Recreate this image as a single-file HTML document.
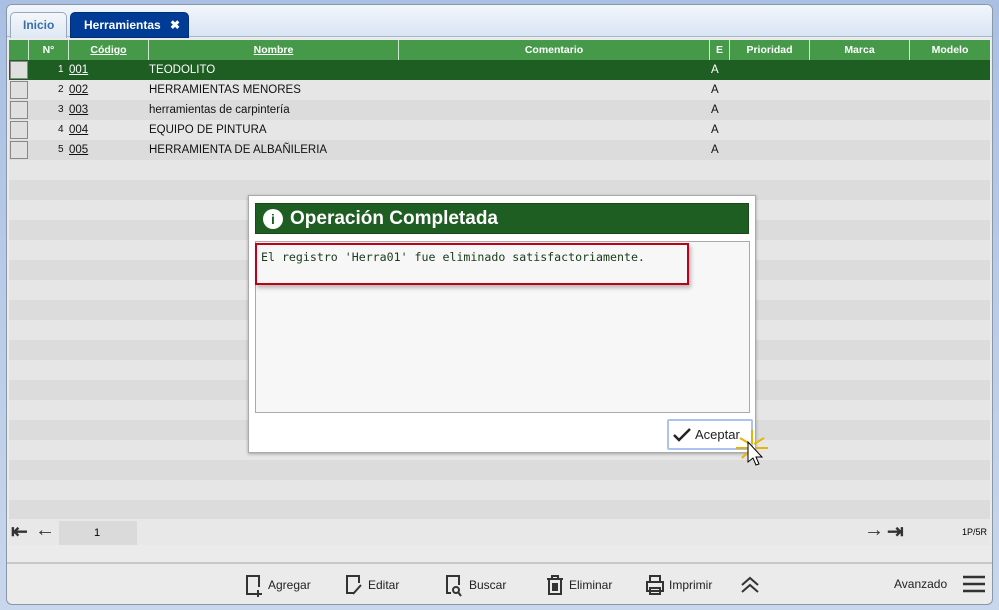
<!DOCTYPE html><html><head><meta charset="utf-8"><style>
*{box-sizing:border-box;margin:0;padding:0}
body{width:999px;height:610px;background:linear-gradient(#a9c0e3,#c9d7ec);font-family:"Liberation Sans",Verdana,sans-serif;position:relative;overflow:hidden}
.win{position:absolute;left:6px;top:4px;width:987px;height:601px;background:#ebebeb;border:1px solid #8a97a8;border-radius:6px;overflow:hidden}
.tabbar{position:absolute;left:0;top:0;width:100%;height:32px;background:linear-gradient(#f2f6fc,#d9e5f4);border-bottom:1px solid #a8b8cc}
.tab{position:absolute;top:7px;height:26px;border-radius:5px 5px 0 0;font-weight:bold;font-size:12px;line-height:24px;padding-left:13px}
.grid{position:absolute;left:2px;top:35px;width:981px}
.hdr{position:absolute;top:0;height:20px;background:#47994a;color:#fff;font-weight:bold;font-size:10.5px;line-height:20px;text-align:center;border-right:1px solid #cfe6cf}
.row{position:absolute;left:0;width:981px;height:20px;font-size:11.5px;line-height:20px;color:#111}
.row span{position:absolute}
.row span.n{font-size:10px}
.cb{position:absolute;left:1px;top:1px;width:18px;height:18px;border:1px solid #888;background:#e0e0e0}
.dlg{position:absolute;left:248px;top:195px;width:508px;height:258px;background:#fff;border:1px solid #aaa;box-shadow:0 1px 3px rgba(0,0,0,.3)}
.tb{font-size:12px;color:#222;position:absolute;top:578px}
.ar{position:absolute;top:0;font-size:20px;font-weight:bold;color:#333}
</style></head><body>
<div class="win">
<div class="tabbar">
<div class="tab" style="left:3px;width:57px;background:linear-gradient(#f4f7fb,#dfe8f3);border:1px solid #9aa8bb;border-bottom:none;color:#3a6ea8;padding-left:12px">Inicio</div>
<div class="tab" style="left:63px;width:119px;background:#003b96;color:#fff;border:1px solid #002f7a">Herramientas<span style="position:absolute;right:8px;font-size:12px">✖</span></div>
</div>
<div class="grid">
<div class="hdr" style="left:0;width:20px"></div>
<div class="hdr" style="left:20px;width:40px">N°</div>
<div class="hdr" style="left:60px;width:80px;text-decoration:underline">Código</div>
<div class="hdr" style="left:140px;width:250px;text-decoration:underline">Nombre</div>
<div class="hdr" style="left:390px;width:311px">Comentario</div>
<div class="hdr" style="left:701px;width:20px">E</div>
<div class="hdr" style="left:721px;width:80px">Prioridad</div>
<div class="hdr" style="left:801px;width:100px">Marca</div>
<div class="hdr" style="left:901px;width:80px;border:none">Modelo</div>
<div class="row" style="top:20px;background:#1e5e22;color:#fff"><div class="cb"></div><span class="n" style="left:49px">1</span><span style="left:60px;text-decoration:underline">001</span><span style="left:140px">TEODOLITO</span><span style="left:702px">A</span></div>
<div class="row" style="top:40px;background:#e6e6e6"><div class="cb"></div><span class="n" style="left:49px">2</span><span style="left:60px;text-decoration:underline">002</span><span style="left:140px">HERRAMIENTAS MENORES</span><span style="left:702px">A</span></div>
<div class="row" style="top:60px;background:#dcdcdc"><div class="cb"></div><span class="n" style="left:49px">3</span><span style="left:60px;text-decoration:underline">003</span><span style="left:140px">herramientas de carpintería</span><span style="left:702px">A</span></div>
<div class="row" style="top:80px;background:#e6e6e6"><div class="cb"></div><span class="n" style="left:49px">4</span><span style="left:60px;text-decoration:underline">004</span><span style="left:140px">EQUIPO DE PINTURA</span><span style="left:702px">A</span></div>
<div class="row" style="top:100px;background:#dcdcdc"><div class="cb"></div><span class="n" style="left:49px">5</span><span style="left:60px;text-decoration:underline">005</span><span style="left:140px">HERRAMIENTA DE ALBAÑILERIA</span><span style="left:702px">A</span></div>
<div style="position:absolute;top:120px;left:0;width:981px;height:360px;background:repeating-linear-gradient(#e6e6e6 0 20px,#dcdcdc 20px 40px)"></div>
<div style="position:absolute;top:479px;left:0;width:981px;height:26px;background:#e8e8e8;font-size:11px">
<span class="ar" style="left:2px">⇤</span><span class="ar" style="left:26px">←</span>
<div style="position:absolute;left:50px;top:2px;width:78px;height:24px;background:#dadada;line-height:24px;padding-left:35px">1</div>
<span class="ar" style="left:855px">→</span><span class="ar" style="left:878px">⇥</span>
<span style="position:absolute;left:953px;top:8px;font-size:9px">1P/5R</span></div>
</div>
<div style="position:absolute;left:0;top:557px;width:100%;height:2px;background:#c8c8c8"></div>
</div>
<svg style="position:absolute;left:244px;top:574px" width="22" height="24" fill="none" stroke="#333" stroke-width="2"><path d="M10 20H3V2h12v11M14 16v7M10 20h8"/></svg>
<div class="tb" style="left:268px">Agregar</div>
<svg style="position:absolute;left:344px;top:574px" width="22" height="24" fill="none" stroke="#333" stroke-width="2"><path d="M10 19H3V2h12v7M9 20l8-9"/></svg>
<div class="tb" style="left:368px">Editar</div>
<svg style="position:absolute;left:444px;top:574px" width="22" height="24" fill="none" stroke="#333" stroke-width="2"><path d="M7 19H3V2h12v9"/><circle cx="12" cy="16" r="3"/><path d="M14 18l3 4"/></svg>
<div class="tb" style="left:469px">Buscar</div>
<svg style="position:absolute;left:545px;top:574px" width="20" height="22" fill="none" stroke="#333" stroke-width="2"><path d="M2 5h16M7 5V2h6v3M4 6v14h12V6M8 9v8M10 9v8M12 9v8"/></svg>
<div class="tb" style="left:569px">Eliminar</div>
<svg style="position:absolute;left:645px;top:574px" width="20" height="22" fill="none" stroke="#333" stroke-width="2"><path d="M5 8V2h10v6M2 8h16v9H2zM5 14h10v6H5z"/></svg>
<div class="tb" style="left:669px">Imprimir</div>
<svg style="position:absolute;left:740px;top:576px" width="20" height="18" fill="none" stroke="#333" stroke-width="2"><path d="M2 9l8-7 8 7M2 16l8-7 8 7"/></svg>
<div class="tb" style="left:894px;top:577px">Avanzado</div>
<svg style="position:absolute;left:963px;top:575px" width="22" height="18" stroke="#333" stroke-width="2.5"><path d="M0 2h22M0 9h22M0 16h22"/></svg>
<div class="dlg">
<div style="position:absolute;left:6px;top:7px;width:494px;height:31px;background:#1e5e22;border:1px solid #164a19;color:#fff;font-weight:bold;font-size:19px;line-height:29px;padding-left:34px">Operación Completada
<div style="position:absolute;left:7px;top:5px;width:20px;height:20px;border-radius:50%;background:#fff;color:#1e5e22;font-size:14px;line-height:20px;text-align:center">i</div></div>
<div style="position:absolute;left:6px;top:45px;width:495px;height:172px;background:#f7f7f7;border:1px solid #aaa"></div>
<div style="position:absolute;left:6px;top:47px;width:434px;height:42px;border:2px solid #c00014;box-shadow:2px 3px 4px rgba(0,0,0,.25)"></div>
<div style="position:absolute;left:12px;top:54px;font-family:'DejaVu Sans Mono','Liberation Mono',monospace;font-size:11.6px;color:#1a3a1a;white-space:nowrap">El registro 'Herra01' fue eliminado satisfactoriamente.</div>
<div style="position:absolute;left:418px;top:223px;width:86px;height:31px;border:2px solid #a9c5ee;border-radius:2px;background:#fff;font-size:13px;line-height:27px;padding-left:26px;color:#222">Aceptar
<svg style="position:absolute;left:3px;top:6px" width="20" height="16" fill="none" stroke="#222" stroke-width="2.5"><path d="M2 8l5 5 11-11"/></svg></div>
<svg style="position:absolute;left:485px;top:232px" width="36" height="40"><g stroke="#e8b400" stroke-width="2"><path d="M18 2v14M6 10l10 6M30 10l-10 6M2 20h14M34 20h-12M8 30l8-8"/></g><path d="M14 14v20l5-4 3 7 3-1-3-7 6 0z" fill="#fff" stroke="#000"/></svg>
</div>
</body></html>
